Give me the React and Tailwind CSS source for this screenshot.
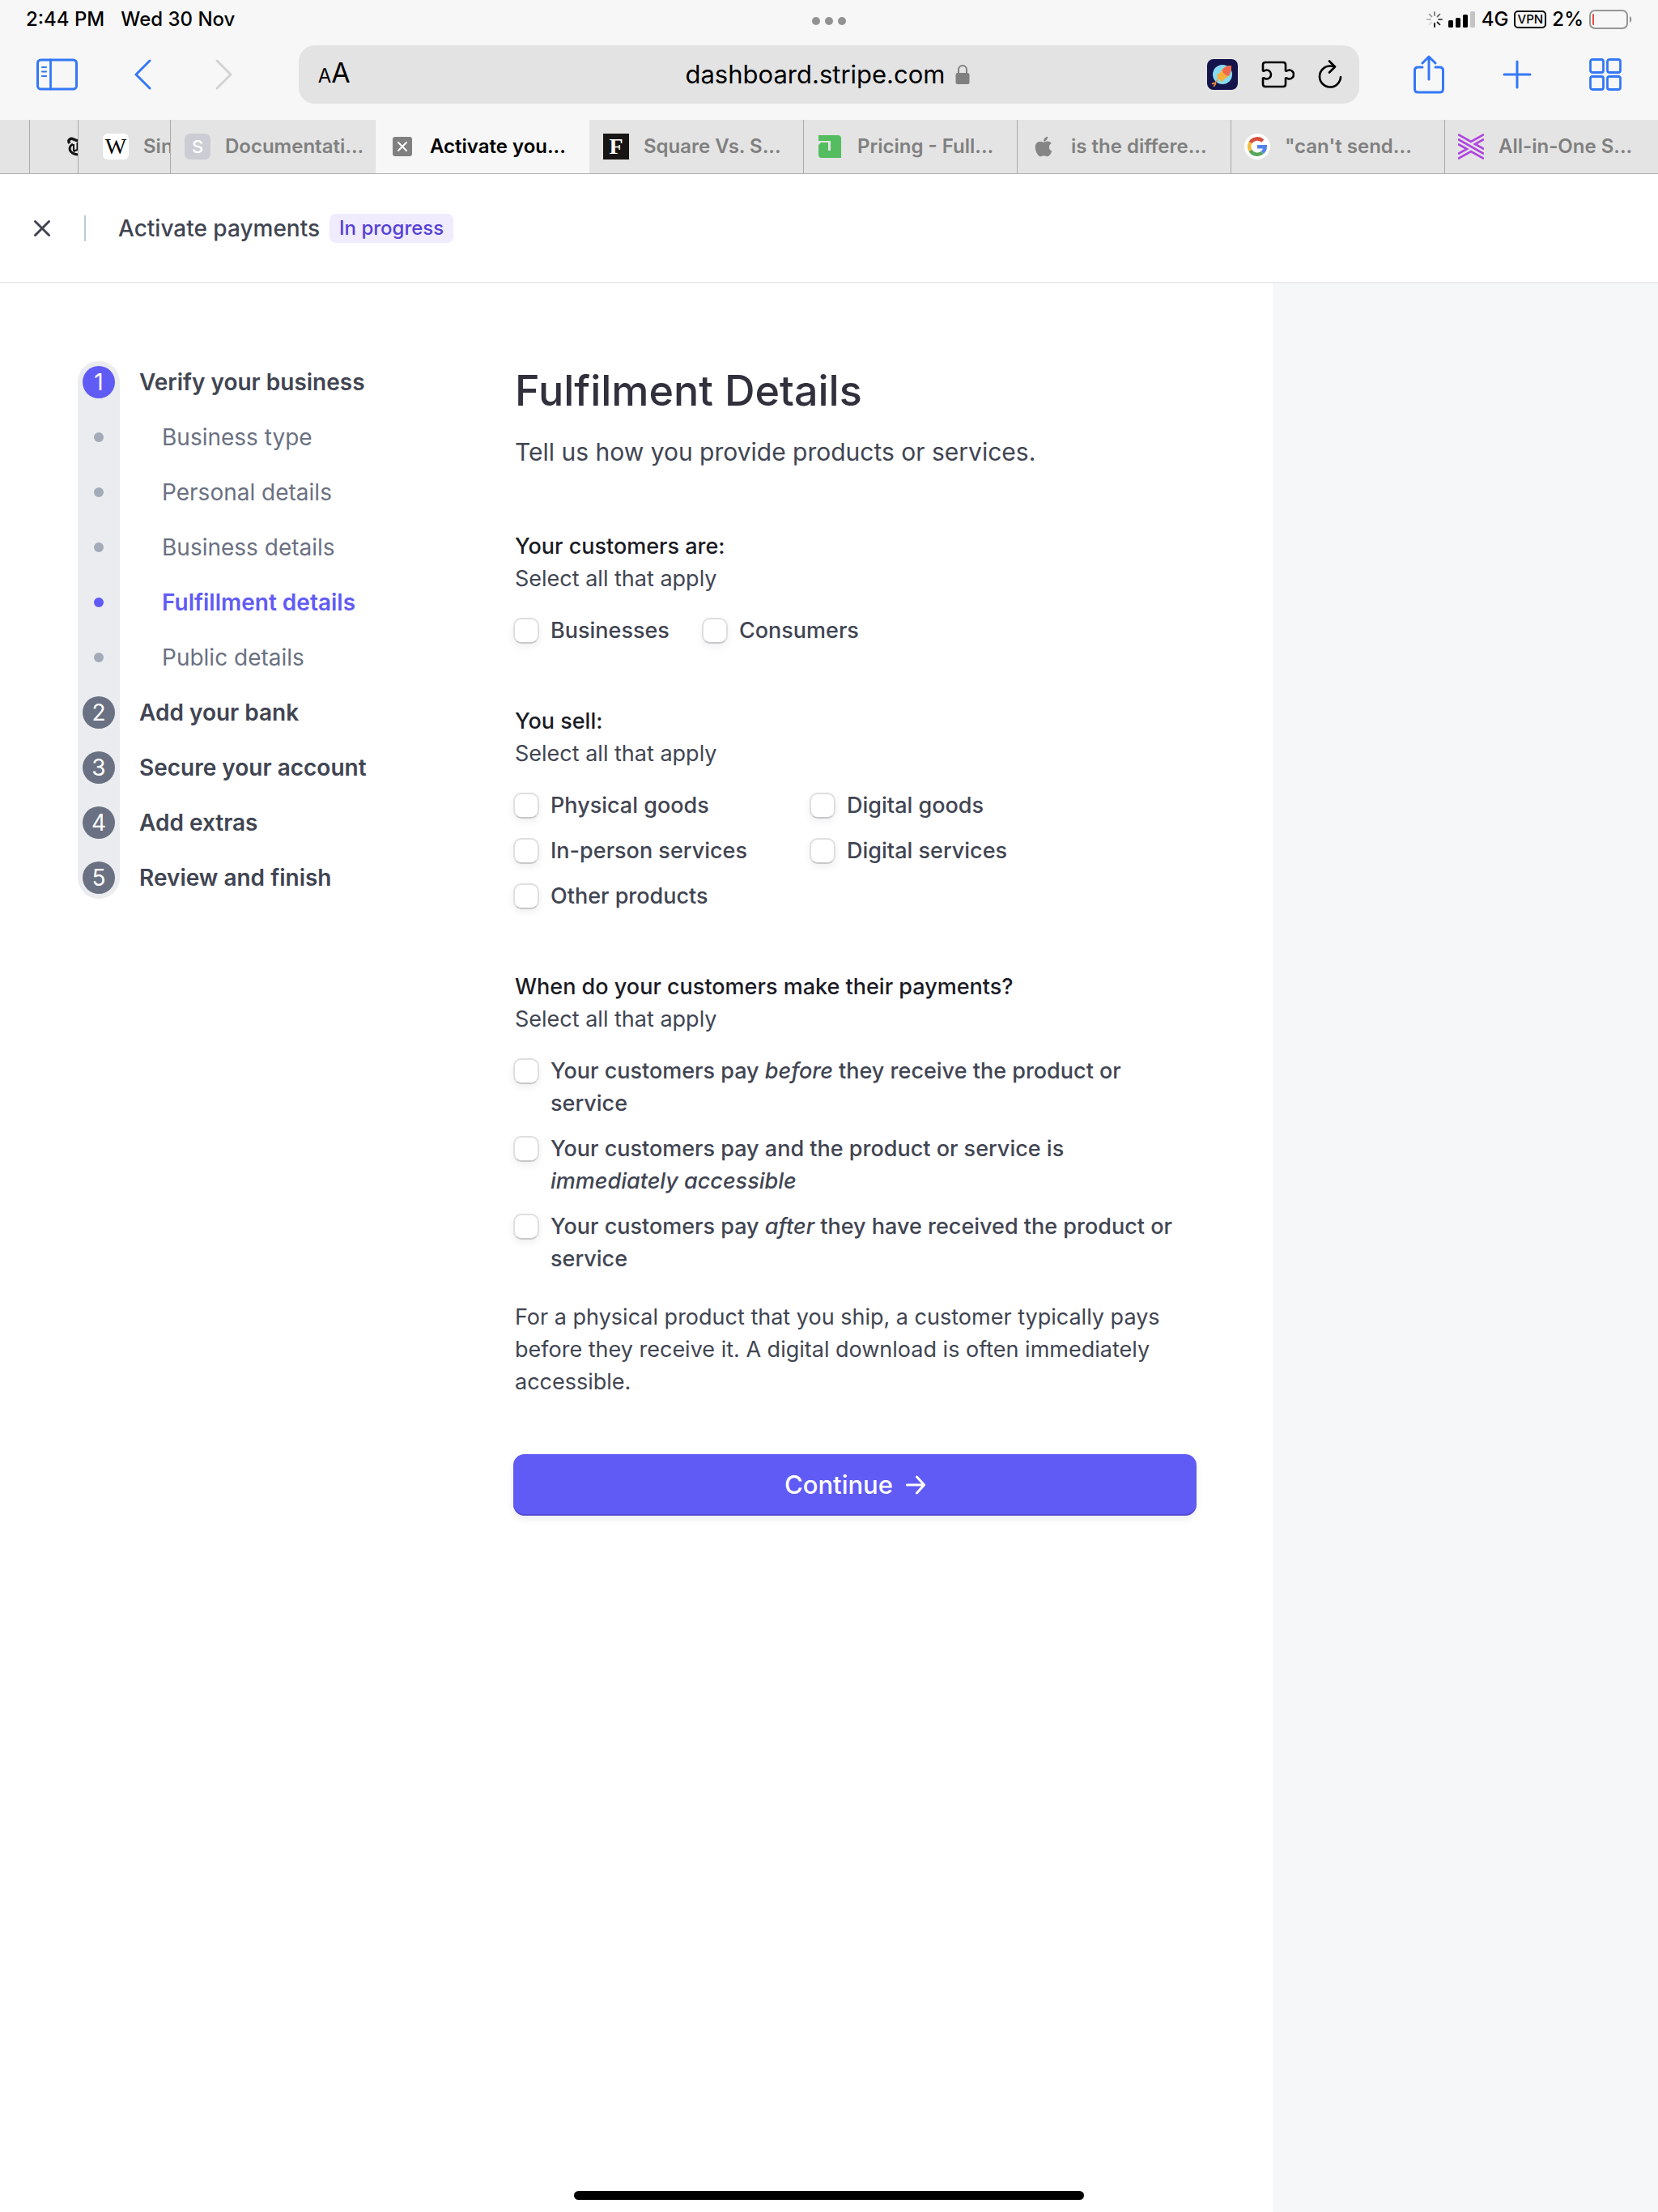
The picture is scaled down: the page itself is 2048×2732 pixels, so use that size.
import React, { useState } from 'react';
import { FaApple } from 'react-icons/fa';

const tabs = [
  { id: 'square', title: 'Square Vs. S...', icon: 'forbes' },
  { id: 'pricing', title: 'Pricing - Full...', icon: 'pricing' },
  { id: 'apple', title: 'is the differe...', icon: 'apple' },
  { id: 'google', title: '"can\'t send...', icon: 'google' },
  { id: 'allinone', title: 'All-in-One S...', icon: 'weave' }
];

const steps = [
  { id: 1, title: 'Verify your business', number: 1, active: true },
  { id: 2, title: 'Business type' },
  { id: 3, title: 'Personal details' },
  { id: 4, title: 'Business details' },
  { id: 5, title: 'Fulfillment details', active: true },
  { id: 6, title: 'Public details' },
  { id: 7, title: 'Add your bank', number: 2 },
  { id: 8, title: 'Secure your account', number: 3 },
  { id: 9, title: 'Add extras', number: 4 },
  { id: 10, title: 'Review and finish', number: 5 }
];

const TabIcon = ({ name }) => {
  switch (name) {
    case 'forbes':
      return (
        <span className="flex h-8 w-8 items-center justify-center bg-[#171614] font-['Liberation_Serif',serif] text-[28px] leading-8 font-bold text-white">
          F
        </span>
      );

    case 'pricing':
      return (
        <svg className="h-8 w-8" viewBox="0 0 32 32" aria-hidden="true">
          <path fill="#54bd60" d="M2 2h24q4 0 4 4v24H6q-4 0-4-4V14l3-3h9v10h3V9H2z" />
        </svg>
      );

    case 'apple':
      return (
        <span className="flex h-8 w-8 items-center justify-center">
          <FaApple className="h-7 w-7 text-[#858585]" />
        </span>
      );

    case 'google':
      return (
        <svg className="h-8 w-8" viewBox="0 0 32 32" aria-hidden="true">
          <circle cx="16" cy="16" r="16" fill="#fff" />
          <g fill="none" strokeWidth="4.500">
            <path stroke="#d94f3d" d="M7.500 11.200a9.800 9.800 0 0 1 15.300-2" />
            <path stroke="#f2bd42" d="M7.500 20.800a9.800 9.800 0 0 1 0-9.600" />
            <path stroke="#58a55c" d="M22.400 23.400a9.800 9.800 0 0 1-14.900-2.600" />
            <path stroke="#5383ec" d="M16 16.200h9.700a9.800 9.800 0 0 1-3.300 7.200" />
          </g>
        </svg>
      );

    default:
      return (
        <svg className="h-8 w-8" viewBox="0 0 32 32" fill="none" stroke="#b044e0" strokeWidth="2.600" aria-hidden="true">
          <path d="M0 1l16 9 16-9M0 7l32 18M32 7l-11 6 11 6M0 13l11 6-11 6M0 31l16-9 16 9" />
        </svg>
      );
  }
};

const StatusBar = () => (
  <div className="grid h-14 grid-cols-3 items-start px-8 pt-2 text-[24px] leading-8 font-medium text-black">
    <div className="flex gap-5">
      <span>2:44 PM</span>
      <span>Wed 30 Nov</span>
    </div>
    <div className="flex h-8 items-center justify-center gap-1.5 pt-1">
      <span className="h-2.5 w-2.5 rounded-full bg-[#929292]" />
      <span className="h-2.5 w-2.5 rounded-full bg-[#929292]" />
      <span className="h-2.5 w-2.5 rounded-full bg-[#929292]" />
    </div>
    <div className="flex items-center justify-end gap-[7px]">
      <svg className="h-5 w-5" viewBox="0 0 20 20" stroke="#000" strokeWidth="1.800" strokeLinecap="round" aria-hidden="true">
        <path opacity=".5" d="M10 1v4" />
        <path opacity=".55" d="M16.400 3.600l-2.900 2.900" />
        <path opacity=".65" d="M19 10h-4" />
        <path opacity=".85" d="M16.400 16.400l-2.900-2.900" />
        <path d="M10 19v-4" />
        <path opacity=".12" d="M3.600 16.400l2.900-2.900" />
        <path opacity=".25" d="M1 10h4" />
        <path opacity=".35" d="M3.600 3.600l2.900 2.900" />
      </svg>
      <svg className="h-5 w-[34px]" viewBox="0 0 34 20" aria-hidden="true">
        <rect x="0" y="11" width="6" height="9" rx="1.500" />
        <rect x="9" y="8" width="6" height="12" rx="1.500" />
        <rect x="18" y="4" width="6" height="16" rx="1.500" />
        <rect x="27" y="0" width="6" height="20" rx="1.500" fill="#c4c4c4" />
      </svg>
      <span>4G</span>
      <span className="flex h-[22px] w-10 items-center justify-center rounded-[5px] border-2 border-black text-[15px] leading-4">VPN</span>
      <span>2%</span>
      <svg className="h-6 w-[53px]" viewBox="0 0 53 24" aria-hidden="true">
        <rect x="1" y="1" width="46" height="22" rx="6" fill="none" stroke="#959595" strokeWidth="2" />
        <rect x="4" y="5" width="2" height="14" rx="1" fill="#eb4d3d" />
        <path d="M50 8c3 1 3 7 0 8z" fill="#959595" />
      </svg>
    </div>
  </div>
);

const Toolbar = () => (
  <div className="flex h-[92px] items-start">
    <div className="flex h-[72px] w-[18%] shrink-0 items-center gap-[70px] pl-[45px]">
      <button type="button" aria-label="Sidebar">
        <svg className="h-10 w-[51px]" viewBox="0 0 51 40" fill="none" stroke="#3478f6" strokeWidth="3" strokeLinecap="round" aria-hidden="true">
          <rect x="1.500" y="2" width="48" height="36" rx="4" />
          <path d="M17.500 2v36" strokeWidth="2.800" />
          <path d="M7 11h5M7 16.500h5M7 22h5" strokeWidth="2.200" />
        </svg>
      </button>
      <button type="button" aria-label="Back">
        <svg className="h-10 w-6" viewBox="0 0 24 40" fill="none" stroke="#3478f6" strokeWidth="3" strokeLinecap="round" strokeLinejoin="round" aria-hidden="true">
          <path d="M19 3L2 20l17 17" />
        </svg>
      </button>
      <button type="button" aria-label="Forward" disabled>
        <svg className="h-10 w-7" viewBox="0 0 28 40" fill="none" stroke="#d3d3d3" strokeWidth="3" strokeLinecap="round" strokeLinejoin="round" aria-hidden="true">
          <path d="M8 3l17 17L8 37" />
        </svg>
      </button>
    </div>
    <div className="flex h-[72px] flex-1 items-center rounded-[20px] bg-[#e3e3e3] pr-5 pl-6 text-black">
      <button type="button" aria-label="Page settings" className="w-40 text-left text-[34px] leading-10">
        <span className="text-[24px]">A</span>A
      </button>
      <div className="flex flex-1 items-center justify-center gap-3 text-[31px] leading-10">
        <span>dashboard.stripe.com</span>
        <svg className="h-6 w-[18px]" viewBox="0 0 18 24" aria-hidden="true">
          <path d="M4 11V6a5 5 0 0 1 10 0v5" fill="none" stroke="#808080" strokeWidth="2" />
          <rect x="0.500" y="10" width="17" height="14" rx="2.500" fill="#808080" />
        </svg>
      </div>
      <div className="flex w-[168px] items-center justify-end gap-7">
        <svg className="h-[38px] w-[38px]" viewBox="0 0 38 38" aria-hidden="true">
          <rect width="38" height="38" rx="8" fill="#15134b" />
          <circle cx="19" cy="19" r="12" fill="#86dcf5" />
          <path d="M30 8c-8 0-12 4-14 9l-4 2 1 3-1 4 4-1 2 4 3-4c6-3 9-8 9-17z" fill="#f7b03c" />
          <path d="M30 8c-5 0-9 2-11 5 0 4 3 7 8 8 2-4 3-8 3-13z" fill="#f0684f" />
          <path d="M13 26l-5 5M11 30l-3 4M8 29l-2 2" stroke="#f28c3a" strokeWidth="1.500" />
        </svg>
        <svg className="h-9 w-[42px]" viewBox="0 0 42 36" fill="none" stroke="#000" strokeWidth="2.600" strokeLinejoin="round" aria-hidden="true">
          <path d="M6 3h22q3 0 3 3v7.500c1.500 1 2.500-1 4.500-1a5.500 5.500 0 0 1 0 11c-2 0-3-2-4.500-1V30q0 3-3 3H6q-3 0-3-3v-7.500c1.500-1 2.500 1 4.500 1a5.500 5.500 0 0 0 0-11c-2 0-3 2-4.500 1V6q0-3 3-3z" />
        </svg>
        <button type="button" aria-label="Reload">
          <svg className="h-9 w-8" viewBox="0 0 32 36" fill="none" stroke="#000" strokeWidth="2.600" strokeLinecap="round" strokeLinejoin="round" aria-hidden="true">
            <path d="M29 21a13 13 0 1 1-13-13.500c2 0 4 .2 6 .8M15 1.500l7 7-7 7" />
          </svg>
        </button>
      </div>
    </div>
    <div className="flex h-[72px] w-[18%] shrink-0 items-center justify-between pr-[45px] pl-[66px] text-[#3478f6]">
      <button type="button" aria-label="Share">
        <svg className="h-12 w-10" viewBox="0 0 40 48" fill="none" stroke="currentColor" strokeWidth="3" strokeLinecap="round" strokeLinejoin="round" aria-hidden="true">
          <path d="M12 15H6.500q-4 0-4 4v23q0 4 4 4h27q4 0 4-4V19q0-4-4-4H28M20 30V2M12 10l8-8 8 8" />
        </svg>
      </button>
      <button type="button" aria-label="New tab">
        <svg className="h-9 w-9" viewBox="0 0 36 36" fill="none" stroke="currentColor" strokeWidth="3" strokeLinecap="round" aria-hidden="true">
          <path d="M18 2v32M2 18h32" />
        </svg>
      </button>
      <button type="button" aria-label="Tab overview">
        <svg className="h-10 w-10" viewBox="0 0 40 40" fill="none" stroke="currentColor" strokeWidth="2.800" aria-hidden="true">
          <rect x="1.500" y="1.500" width="16" height="16" rx="2.500" />
          <rect x="22.500" y="1.500" width="16" height="16" rx="2.500" />
          <rect x="1.500" y="22.500" width="16" height="16" rx="2.500" />
          <rect x="22.500" y="22.500" width="16" height="16" rx="2.500" />
        </svg>
      </button>
    </div>
  </div>
);

const TabBar = () => (
  <nav className="flex h-[67px] border-b border-[#b0b0b0] bg-[#e4e4e4] text-[24px] leading-8 font-semibold whitespace-nowrap text-[#808080]">
    <div className="w-9 shrink-0" />
    <div className="flex w-[60px] shrink-0 items-center overflow-hidden border-l border-[#a9a9a9] pl-[46px]">
      {/* Blackletter favicon, half hidden behind the next tab */}
      <svg className="h-6 w-6 shrink-0" viewBox="0 0 24 24" fill="none" stroke="#151515" aria-hidden="true">
        <path strokeWidth="3.500" d="M3 8C0 4 4 1 8 3s10 3 14 0" />
        <path strokeWidth="3" d="M7 9c-6 3-6 12 7 13 4 0 7-2 9-5" />
        <path strokeWidth="2" d="M8 9v9M8 18l4-2" />
        <path strokeWidth="3" d="M13 7v10" />
      </svg>
    </div>
    <div className="flex w-[114px] shrink-0 items-center gap-[18px] overflow-hidden border-l border-[#a9a9a9] pl-[30px]">
      <span className="flex h-8 w-8 shrink-0 items-center justify-center rounded-md bg-white font-['Liberation_Serif',serif] text-[28px] leading-8 font-normal text-black">W</span>
      <a href="#sin">Sin</a>
    </div>
    <div className="flex w-[254px] shrink-0 items-center gap-[18px] overflow-hidden border-l border-[#a9a9a9] pl-[17px]">
      <span className="flex h-8 w-8 shrink-0 items-center justify-center rounded-[7px] bg-[#cccdd4] text-[22px] leading-8 font-medium text-white">S</span>
      <a href="#docs">Documentati...</a>
    </div>
    <div className="grid flex-1 grid-cols-6">
      <div className="flex items-center gap-[22px] overflow-hidden bg-[#f7f7f7] pl-[21px] text-black">
        <button type="button" aria-label="Close tab" className="flex h-6 w-6 shrink-0 items-center justify-center rounded-[3px] bg-[#808080]">
          <svg className="h-3 w-3" viewBox="0 0 12 12" stroke="#fff" strokeWidth="2" strokeLinecap="round" aria-hidden="true">
            <path d="M1 1l10 10M11 1L1 11" />
          </svg>
        </button>
        <a href="#activate">Activate you...</a>
      </div>
      {tabs.map((tab, index) => (
        <div
          key={tab.id}
          className={`flex items-center gap-[18px] overflow-hidden border-l pl-4 ${
            index === 0 ? 'border-transparent' : 'border-[#a9a9a9]'
          }`}
        >
          <span className="shrink-0"><TabIcon name={tab.icon} /></span>
          <a href={`#${tab.id}`}>{tab.title}</a>
        </div>
      ))}
    </div>
  </nav>
);

const Checkbox = ({ children }) => {
  const [checked, setChecked] = useState(false);

  return (
    <label className="flex items-start gap-3.5 font-medium">
      <span className="flex h-10 shrink-0 items-center">
        <input
          type="checkbox"
          checked={checked}
          onChange={() => setChecked(!checked)}
          className="h-8 w-8 appearance-none rounded-[10px] border-2 border-[#dfdfe1] border-b-[#c8c8ca] bg-white shadow-[0_4px_8px_rgba(60,66,87,0.08)] checked:border-[#615bf5] checked:bg-[#615bf5]"
        />
      </span>
      <span>{children}</span>
    </label>
  );
};

const Question = ({ title, children }) => (
  <fieldset>
    <legend className="pl-0.5 font-medium text-[#1a1b25]">{title}</legend>
    <p className="pl-0.5">Select all that apply</p>
    <div className="pt-6">{children}</div>
  </fieldset>
);

const StepList = () => (
  <nav className="w-[538px] shrink-0 pt-24 pl-24">
    <ol className="flex w-[52px] flex-col gap-4 rounded-full bg-[#ebecf0] text-[28px]">
      {steps.map(step => (
        <li key={step.id} className="flex h-[52px] items-center gap-6 whitespace-nowrap">
          <span className="flex w-[52px] shrink-0 justify-center">
            {step.number ? (
              <span className={`flex h-10 w-10 items-center justify-center rounded-full leading-10 text-white ${
                step.active ? 'bg-[#615bf5]' : 'bg-[#6a7182]'
              }`}>
                {step.number}
              </span>
            ) : (
              <span className={`h-3 w-3 rounded-full ${step.active ? 'bg-[#615bf5]' : 'bg-[#a3abb8]'}`} />
            )}
          </span>
          <a
            href={`#step-${step.id}`}
            className={
              step.number
                ? 'font-semibold text-[#414552]'
                : step.active
                  ? 'pl-7 font-semibold text-[#615bf5]'
                  : 'pl-7 text-[#6a7182]'
            }
          >
            {step.title}
          </a>
        </li>
      ))}
    </ol>
  </nav>
);

const App = () => (
  <div className="flex min-h-screen flex-col bg-white font-['Inter',sans-serif]">
    <div className="bg-[#f7f7f7]">
      <StatusBar />
      <Toolbar />
      <TabBar />
    </div>

    <header className="flex h-[135px] items-center border-b-2 border-[#ebebf1] pl-10 text-[28px] leading-10 text-[#414552]">
      <button type="button" aria-label="Close">
        <svg className="h-6 w-6" viewBox="0 0 24 24" stroke="currentColor" strokeWidth="3" strokeLinecap="round" aria-hidden="true">
          <path d="M3.500 3.500l17 17M20.500 3.500l-17 17" />
        </svg>
      </button>
      <span className="ml-10 h-8 w-0.5 bg-[#c0c8d2]" />
      <h1 className="ml-10 font-medium">Activate payments</h1>
      <span className="ml-3 rounded-lg bg-[#f0ebfd] px-3 text-[24px] leading-9 font-medium text-[#5542d6]">In progress</span>
    </header>

    <div className="flex flex-1">
      <StepList />
      <main className="flex-1 pt-[100px] pr-[94px] pb-40 pl-24">
        <form className="text-[27px] leading-10 text-[#414552]">
          <h2 className="pl-0.5 text-[52px] leading-[66px] font-medium text-[#30313d]">Fulfilment Details</h2>
          <p className="pt-4 pl-0.5 text-[30px] leading-[52px]">Tell us how you provide products or services.</p>
          <div className="flex flex-col gap-[72px] pt-[71px]">
            <Question title="Your customers are:">
              <div className="flex gap-10">
                <Checkbox>Businesses</Checkbox>
                <Checkbox>Consumers</Checkbox>
              </div>
            </Question>
            <Question title="You sell:">
              <div className="grid grid-cols-[366px_1fr] gap-y-4">
                <Checkbox>Physical goods</Checkbox>
                <Checkbox>Digital goods</Checkbox>
                <Checkbox>In-person services</Checkbox>
                <Checkbox>Digital services</Checkbox>
                <Checkbox>Other products</Checkbox>
              </div>
            </Question>
            <Question title="When do your customers make their payments?">
              <div className="flex flex-col gap-4">
                <Checkbox>Your customers pay <em>before</em> they receive the product or service</Checkbox>
                <Checkbox>Your customers pay and the product or service is <em>immediately accessible</em></Checkbox>
                <Checkbox>Your customers pay <em>after</em> they have received the product or service</Checkbox>
              </div>
              <p className="pt-8 pl-0.5">
                For a physical product that you ship, a customer typically pays before they receive it. A digital download is often immediately accessible.
              </p>
            </Question>
          </div>
          <button type="button" className="mt-[69px] flex h-[76px] w-full items-center justify-center gap-4 rounded-[14px] bg-[#615bf5] text-[31px] font-medium text-white shadow-[inset_0_-2px_0_rgba(60,50,160,0.4),0_4px_8px_rgba(60,66,87,0.1)]">
            Continue
            <svg className="h-6 w-6" viewBox="0 0 24 24" fill="none" stroke="currentColor" strokeWidth="3" strokeLinecap="round" strokeLinejoin="round" aria-hidden="true">
              <path d="M1.500 12h21M13.500 2l9 10-9 10" />
            </svg>
          </button>
        </form>
      </main>
      <aside className="w-[476px] shrink-0 bg-[#f6f7f9]" />
    </div>
    <div className="fixed bottom-[15px] left-1/2 h-[11px] w-[630px] -translate-x-1/2 rounded-full bg-black" />
  </div>
);

export default App;
